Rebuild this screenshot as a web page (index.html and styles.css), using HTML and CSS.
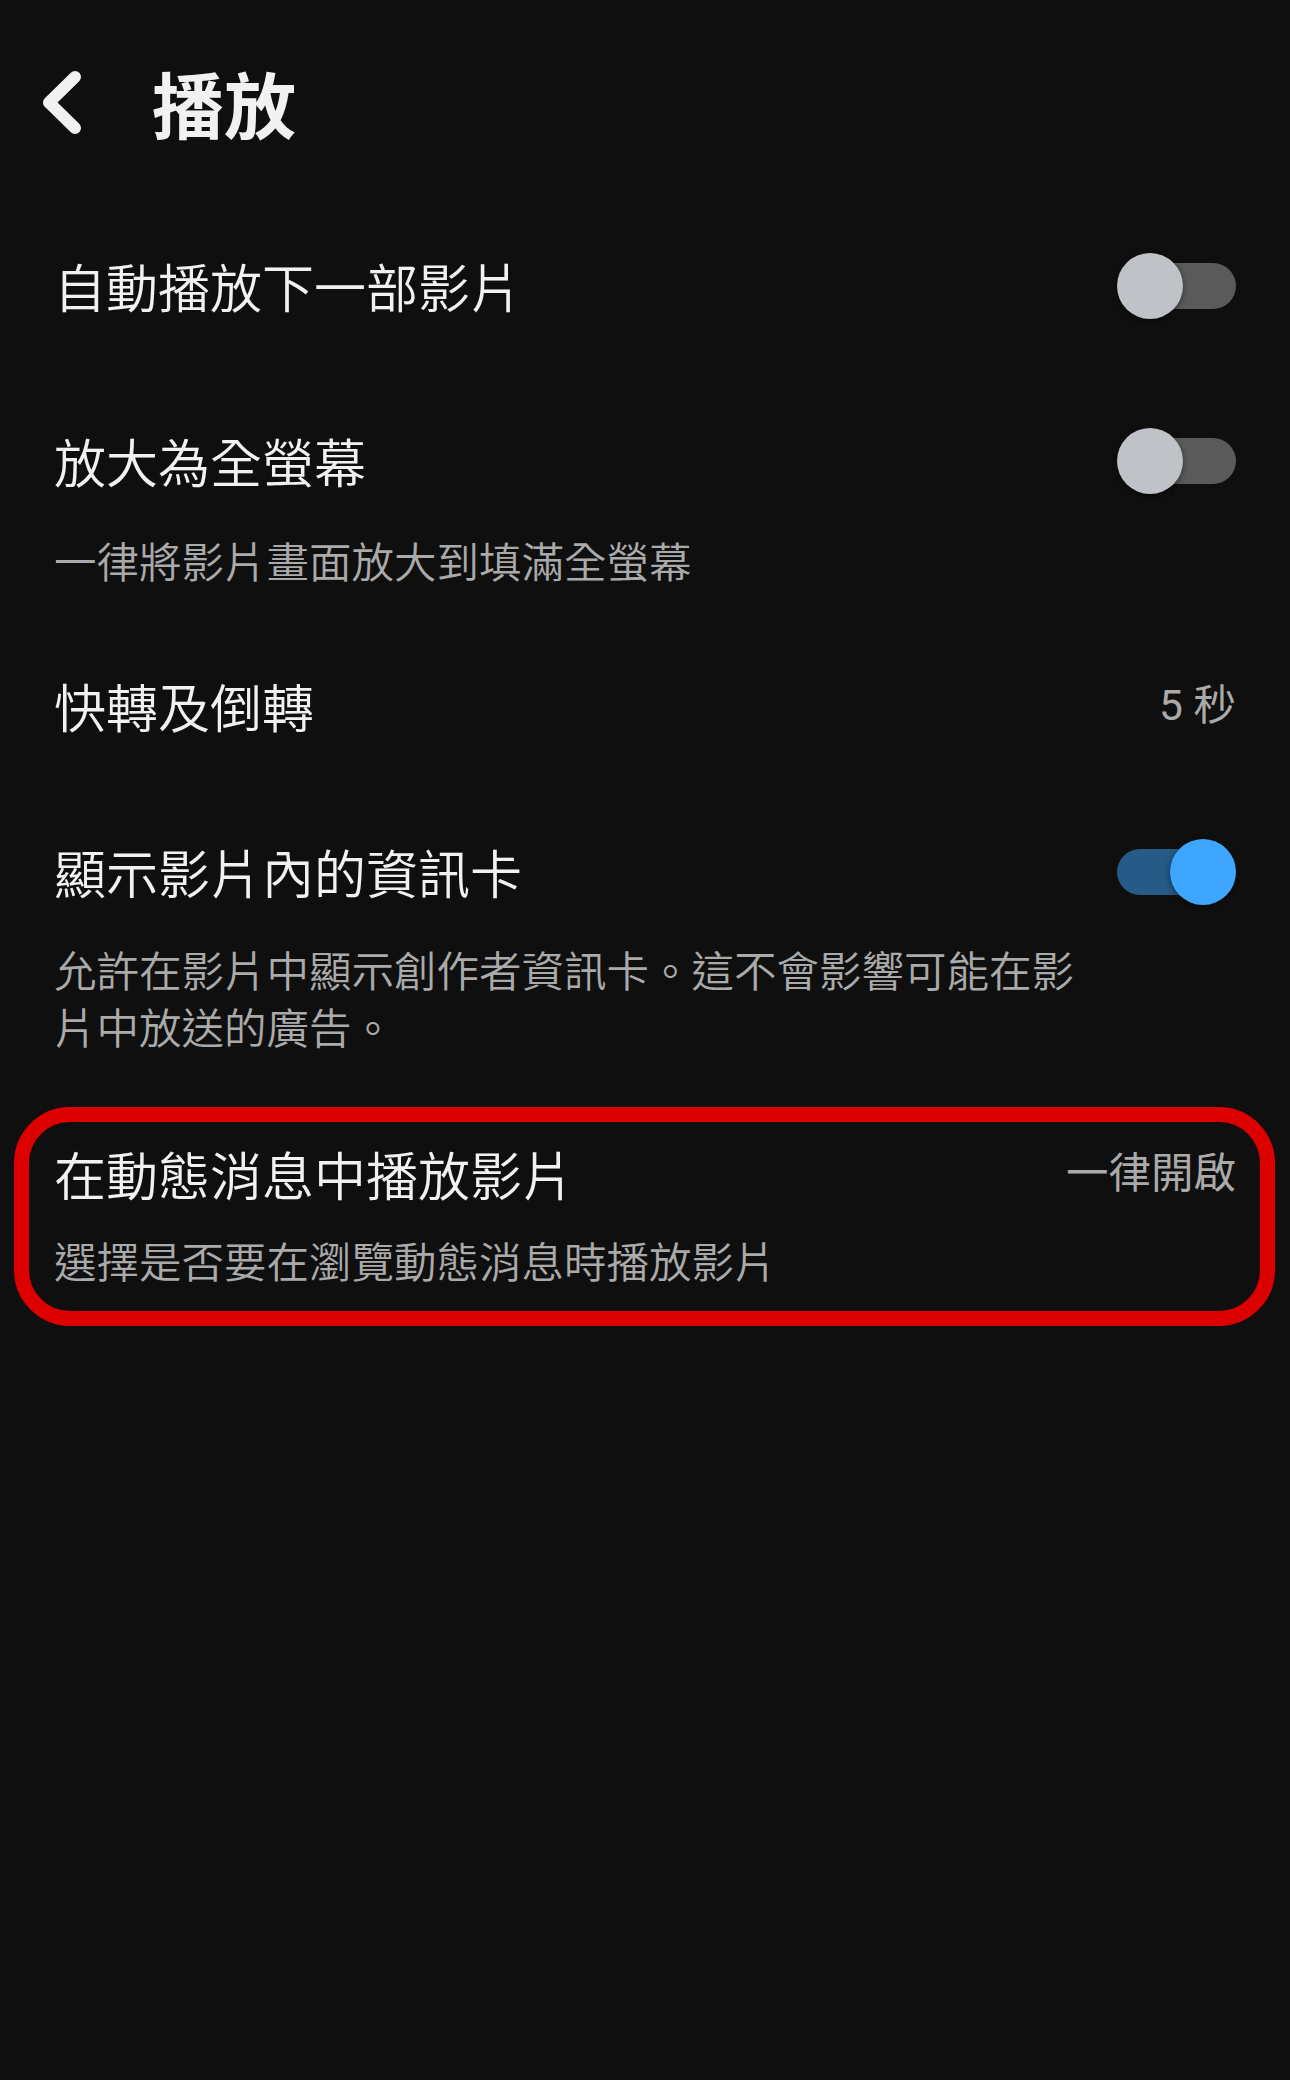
FILE: index.html
```html
<!DOCTYPE html>
<html lang="zh-Hant">
<head>
<meta charset="utf-8">
<title>播放</title>
<link rel="stylesheet" href="styles.css">
</head>
<body>
<div class="screen">
  <header class="header">
    <svg class="back" width="48" height="72" viewBox="0 0 48 72" aria-hidden="true">
      <polyline points="37,11 11,36.5 37,62" fill="none" stroke="#f1f1f1" stroke-width="12" stroke-linecap="round" stroke-linejoin="round"/>
    </svg>
    <h1 class="title">播放</h1>
  </header>

  <div class="list">
    <div class="row row-1">
      <div class="text">
        <div class="label">自動播放下一部影片</div>
      </div>
      <div class="widget">
        <div class="switch"><div class="track"></div><div class="knob"></div></div>
      </div>
    </div>

    <div class="row row-2">
      <div class="text">
        <div class="label">放大為全螢幕</div>
        <div class="sub">一律將影片畫面放大到填滿全螢幕</div>
      </div>
      <div class="widget">
        <div class="switch"><div class="track"></div><div class="knob"></div></div>
      </div>
    </div>

    <div class="row row-3">
      <div class="text">
        <div class="label">快轉及倒轉</div>
      </div>
      <div class="widget">
        <span class="value">5 秒</span>
      </div>
    </div>

    <div class="row row-4">
      <div class="text">
        <div class="label">顯示影片內的資訊卡</div>
        <div class="sub">允許在影片中顯示創作者資訊卡。這不會影響可能在影片中放送的廣告。</div>
      </div>
      <div class="widget">
        <div class="switch on"><div class="track"></div><div class="knob"></div></div>
      </div>
    </div>

    <div class="row row-5">
      <div class="text">
        <div class="label">在動態消息中播放影片</div>
        <div class="sub">選擇是否要在瀏覽動態消息時播放影片</div>
      </div>
      <div class="widget">
        <span class="value">一律開啟</span>
      </div>
      <div class="highlight"></div>
    </div>
  </div>
</div>
</body>
</html>
```

FILE: styles.css
```css
html, body {
  margin: 0;
  padding: 0;
  background: #0f0f0f;
}

body {
  font-family: "Noto Sans CJK TC", "Noto Sans", Roboto, sans-serif;
  color: #f1f1f1;
}

.screen {
  width: 1290px;
  min-height: 2080px;
  background: #0f0f0f;
}

.header {
  height: 204px;
  display: flex;
  align-items: center;
  padding-left: 38px;
  box-sizing: border-box;
}

.back {
  display: block;
  flex: none;
}

.title {
  margin: 0 0 0 66px;
  font-size: 72px;
  font-weight: 700;
  line-height: 90px;
  color: #f1f1f1;
}

.list {
  display: flex;
  flex-direction: column;
}

.row {
  position: relative;
  display: flex;
  align-items: flex-start;
  gap: 32px;
  padding: 44px 54px;
}

.row-1 { padding-top: 52px; padding-bottom: 58px; }
.row-2 { padding-top: 57px; padding-bottom: 44px; }
.row-3 { padding-top: 44px; padding-bottom: 53px; }
.row-4 { padding-top: 53px; padding-bottom: 46px; }
.row-5 { padding-top: 44px; padding-bottom: 38px; }

.text {
  flex: 1;
  min-width: 0;
}

.label {
  font-size: 52px;
  font-weight: 350;
  line-height: 60px;
  color: #f1f1f1;
}

.sub {
  margin-top: 40px;
  font-size: 42.5px;
  font-weight: 350;
  line-height: 57px;
  color: #aaaaaa;
}

.row-4 .sub { margin-top: 38px; }
.row-5 .sub { margin-top: 27px; }

.widget {
  flex: none;
  height: 60px;
  display: flex;
  align-items: center;
  justify-content: flex-end;
}

.value {
  font-family: Roboto, "Noto Sans CJK TC", sans-serif;
  font-size: 42.5px;
  font-weight: 400;
  line-height: 60px;
  color: #aaaaaa;
  white-space: nowrap;
}

.switch {
  position: relative;
  width: 119px;
  height: 66px;
}

.track {
  margin: 10px 0 0 6px;
  height: 46px;
  border-radius: 23px;
  background: #5a5a5a;
}

.knob {
  position: absolute;
  top: 0;
  left: 0;
  width: 66px;
  height: 66px;
  border-radius: 50%;
  background: #bfc2c7;
  box-shadow: 0 2px 6px rgba(0, 0, 0, 0.45);
}

.switch.on .track {
  margin: 10px 6px 0 0;
  background: #265a87;
}

.switch.on .knob {
  left: auto;
  right: 0;
  background: #3ea6ff;
}

.highlight {
  position: absolute;
  top: 7px;
  left: 14px;
  right: 15px;
  height: 219px;
  box-sizing: border-box;
  border: 15px solid #dd0000;
  border-radius: 56px;
  pointer-events: none;
}
```
